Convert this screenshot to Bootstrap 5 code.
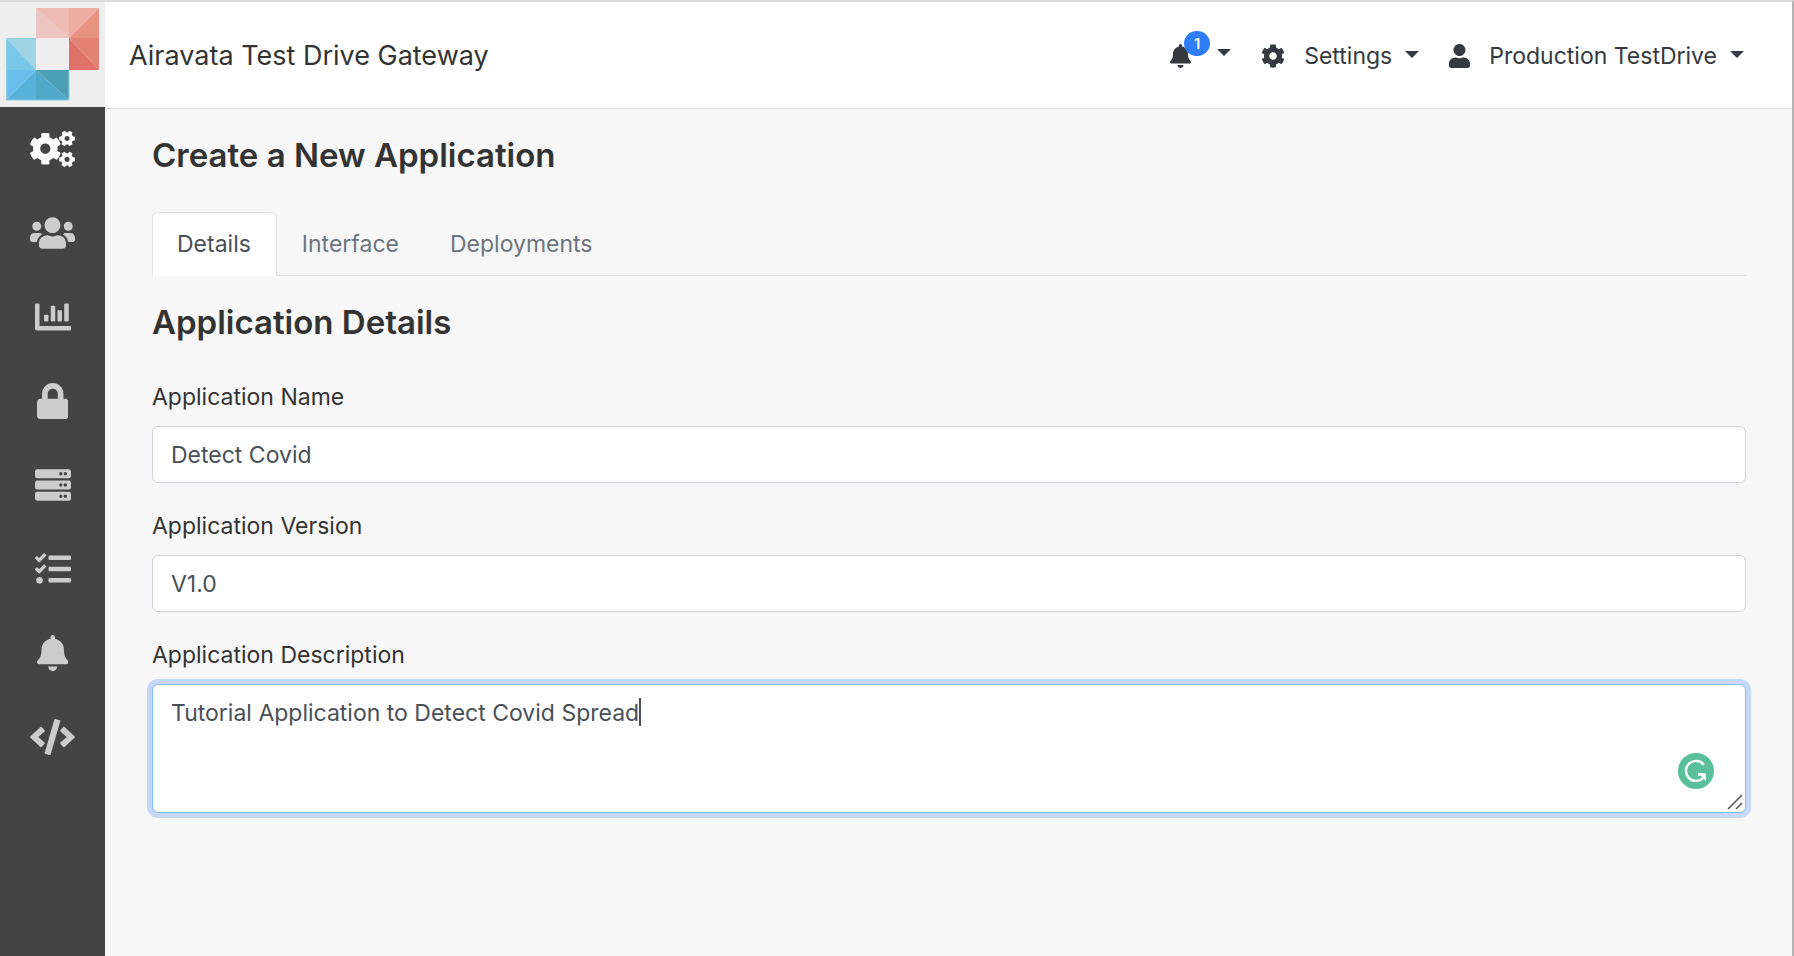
<!DOCTYPE html>
<html lang="en">
<head>
<meta charset="utf-8">
<meta name="viewport" content="width=device-width, initial-scale=1">
<title>Airavata Test Drive Gateway</title>
<link rel="stylesheet" href="https://cdn.jsdelivr.net/npm/bootstrap@5.3.0/dist/css/bootstrap.min.css">
<style>
  body { font-family: Inter, "Liberation Sans", sans-serif; font-size: 23px; line-height: 36px; color: #333; background: #f7f7f7; }
  .app-shell { border-top: 2px solid #dcdcdc; border-right: 2px solid #b4b4b4; }
  .side-rail { width: 105px; background: #444; }
  .side-rail .nav-link { height: 84px; color: #ccc; }
  .side-rail .nav-link.active { color: #fff; }
  .side-rail svg:not(.brand-logo) { height: 36px; fill: currentColor; }
  .brand-logo { width: 105px; height: 105px; }
  .top-bar { height: 107px; border-bottom: 1px solid #dcdcdc; padding: 2px 48px 0 24px; }
  .site-title { font-size: 27px; color: #333; }
  .top-bar .menu-btn { color: #343a40; font-size: 23px; line-height: 36px; }
  .top-bar .menu-btn svg { height: 24px; margin-right: 19px; fill: currentColor; }
  .top-bar .bell-toggle svg { margin-right: 0; }
  .top-bar .dropdown-toggle::after { border-width: 7px 7px 0; margin: 0 0 4px 13px; }
  .top-bar .bell-toggle::after { margin-left: 26px; margin-bottom: 8px; }
  .menu-gap { gap: 30px; }
  .top-bar .bell-badge { left: 14px; top: -13px; min-width: 26px; font-size: 15px; line-height: 25px; background: #2f7df6; font-weight: 600; }
  .page-body { padding: 24px 46px 24px 47px; }
  h1, h2 { font-size: 33px; font-weight: 600; line-height: 44px; }
  .tab-strip { border-bottom: 1px solid #dee2e6; --bs-nav-tabs-border-radius: 6px; margin-top: 35px; }
  .tab-strip .nav-link { padding: 12px 25px 12px 24px; line-height: 38px; color: #6c757d; }
  .tab-strip .nav-link.active { color: #495057; background: #fff; border-color: #dee2e6 #dee2e6 #fff; }
  .details-form { padding-top: 34px; }
  .form-label { margin-bottom: 11px; padding-top: 1px; display: block; }
  .form-control { font-size: 23px; line-height: 36px; padding: 10px 18px; height: 57px; color: #495057; border: 1px solid #ced4da; border-radius: 6px; }
  textarea.form-control { height: 129px; resize: none; border-color: #80bdff; box-shadow: 0 0 0 5px #c5d8f8; }
  .text-caret { left: 487px; top: 14px; width: 2px; height: 28px; background: #495057; }
  .writing-mark { right: 32px; bottom: 24px; width: 36px; height: 36px; }
  .grip-mark { right: 3px; bottom: 3px; width: 16px; height: 16px; }
</style>
</head>
<body>
<svg class="d-none" aria-hidden="true">
  <symbol id="cog" viewBox="0 0 512 512"><path d="M487.4 315.7l-42.6-24.6c4.3-23.2 4.3-47 0-70.2l42.6-24.6c4.9-2.8 7.1-8.6 5.5-14-11.1-35.6-30-67.8-54.7-94.6-3.8-4.1-10-5.1-14.8-2.3L380.8 110c-17.9-15.4-38.5-27.3-60.8-35.1V25.8c0-5.6-3.9-10.5-9.4-11.7-36.7-8.2-74.3-7.8-109.2 0-5.5 1.2-9.4 6.1-9.4 11.7V75c-22.2 7.9-42.8 19.8-60.8 35.1L88.7 85.5c-4.9-2.8-11-1.9-14.8 2.3-24.7 26.7-43.6 58.9-54.7 94.6-1.7 5.4.6 11.2 5.5 14L67.3 221c-4.3 23.2-4.3 47 0 70.2l-42.6 24.6c-4.9 2.8-7.1 8.6-5.5 14 11.1 35.6 30 67.8 54.7 94.6 3.8 4.1 10 5.1 14.8 2.3l42.6-24.6c17.9 15.4 38.5 27.3 60.8 35.1v49.2c0 5.6 3.9 10.5 9.4 11.7 36.7 8.2 74.3 7.8 109.2 0 5.5-1.2 9.4-6.1 9.4-11.7v-49.2c22.2-7.9 42.8-19.8 60.8-35.1l42.6 24.6c4.9 2.8 11 1.9 14.8-2.3 24.7-26.7 43.6-58.9 54.7-94.6 1.5-5.5-.7-11.3-5.6-14.1zM256 336c-44.1 0-80-35.9-80-80s35.9-80 80-80 80 35.9 80 80-35.9 80-80 80z"/></symbol>
  <symbol id="bell" viewBox="0 0 448 512"><path d="M224 512c35.32 0 63.97-28.65 63.97-64H160.03c0 35.35 28.65 64 63.97 64zm215.39-149.71c-19.32-20.76-55.47-51.99-55.47-154.29 0-77.7-54.48-139.9-127.94-155.16V32c0-17.67-14.32-32-31.98-32s-31.98 14.33-31.98 32v20.84C118.56 68.1 64.08 130.3 64.08 208c0 102.3-36.15 133.53-55.47 154.29-6 6.45-8.66 14.16-8.61 21.71.11 16.4 12.98 32 32.1 32h383.8c19.12 0 32-15.6 32.1-32 .05-7.55-2.61-15.27-8.61-21.71z"/></symbol>
</svg>
<div class="app-shell d-flex min-vh-100">
  <aside class="side-rail flex-shrink-0">
    <a href="#" class="d-block" aria-label="Home">
      <svg class="brand-logo d-block" viewBox="0 0 105 105">
        <path fill="#eee" d="M0 0h105v105H0z"/>
        <path fill="#ecc4c0" d="M36 6l33 30H36z"/><path fill="#eebcb2" d="M36 6h33v30z"/>
        <path fill="#eeae9f" d="M69 6h30L69 36z"/><path fill="#e89282" d="M99 6v30H69z"/>
        <path fill="#e58278" d="M69 36h30v32z"/><path fill="#df726b" d="M69 36l30 32H69z"/>
        <path fill="#a0d4e3" d="M6 36h30v32z"/><path fill="#79c8e9" d="M6 36l30 32H6z"/>
        <path fill="#68bfed" d="M6 68h30L6 98z"/><path fill="#58b3da" d="M36 68v30H6z"/>
        <path fill="#4da0b3" d="M36 68h33v30z"/><path fill="#4fa9c8" d="M36 68l33 30H36z"/>
        <path fill="none" stroke="#8ccde4" d="M36 36.500H6.500V98H69V68"/>
      </svg>
    </a>
    <nav class="nav flex-column" aria-label="Main">
      <a href="#" class="nav-link active p-0 d-flex align-items-center justify-content-center" aria-label="Applications" aria-current="page"><svg viewBox="0 0 640 512"><use href="#cog" x="-14" y="20" width="464" height="464"/><g transform="rotate(90 527 106)"><use href="#cog" x="411" y="-10" width="232" height="232"/></g><g transform="rotate(90 527 404)"><use href="#cog" x="411" y="288" width="232" height="232"/></g></svg></a>
      <a href="#" class="nav-link p-0 d-flex align-items-center justify-content-center" aria-label="Groups"><svg viewBox="0 0 640 512"><path d="M96 224c35.3 0 64-28.7 64-64s-28.7-64-64-64-64 28.7-64 64 28.700 64 64 64zm448 0c35.300 0 64-28.700 64-64s-28.700-64-64-64-64 28.700-64 64 28.700 64 64 64zm32 32h-64c-17.600 0-33.500 7.100-45.100 18.600 40.300 22.100 68.900 62 75.100 109.400h66c17.700 0 32-14.300 32-32v-32c0-35.300-28.700-64-64-64zm-256 0c61.900 0 112-50.100 112-112S381.900 32 320 32 208 82.100 208 144s50.100 112 112 112zm76.800 32h-8.300c-20.800 10-43.900 16-68.500 16s-47.600-6-68.500-16h-8.300C179.600 288 128 339.600 128 403.200V432c0 26.500 21.500 48 48 48h288c26.500 0 48-21.500 48-48v-28.800c0-63.600-51.600-115.200-115.200-115.200zm-223.700-13.400C161.500 263.100 145.600 256 128 256H64c-35.300 0-64 28.700-64 64v32c0 17.700 14.300 32 32 32h65.900c6.300-47.400 34.900-87.300 75.200-109.400z"/></svg></a>
      <a href="#" class="nav-link p-0 d-flex align-items-center justify-content-center" aria-label="Statistics"><svg viewBox="0 0 512 512"><path d="M332.8 320h38.4c6.400 0 12.800-6.400 12.800-12.800V172.800c0-6.400-6.400-12.800-12.800-12.800h-38.400c-6.400 0-12.800 6.400-12.800 12.800v134.400c0 6.400 6.400 12.800 12.800 12.800zm96 0h38.400c6.400 0 12.800-6.400 12.800-12.800V76.800c0-6.400-6.400-12.800-12.800-12.800h-38.400c-6.400 0-12.800 6.400-12.800 12.800v230.400c0 6.400 6.400 12.800 12.800 12.800zm-288 0h38.400c6.400 0 12.800-6.400 12.800-12.800v-70.400c0-6.400-6.400-12.800-12.800-12.800h-38.400c-6.400 0-12.800 6.400-12.800 12.800v70.400c0 6.400 6.400 12.800 12.800 12.800zm96 0h38.400c6.400 0 12.800-6.400 12.800-12.800V108.800c0-6.400-6.400-12.800-12.800-12.800h-38.400c-6.400 0-12.800 6.400-12.800 12.800v198.400c0 6.400 6.400 12.800 12.800 12.800zM496 384H64V80c0-8.840-7.160-16-16-16H16C7.160 64 0 71.160 0 80v336c0 17.670 14.330 32 32 32h464c8.840 0 16-7.160 16-16v-32c0-8.840-7.160-16-16-16z"/></svg></a>
      <a href="#" class="nav-link p-0 d-flex align-items-center justify-content-center" aria-label="Credentials"><svg viewBox="0 0 448 512"><path d="M400 224h-24v-72C376 68.200 307.800 0 224 0S72 68.200 72 152v72H48c-26.500 0-48 21.500-48 48v192c0 26.500 21.500 48 48 48h352c26.500 0 48-21.500 48-48V272c0-26.500-21.500-48-48-48zm-104 0H152v-72c0-39.700 32.300-72 72-72s72 32.300 72 72v72z"/></svg></a>
      <a href="#" class="nav-link p-0 d-flex align-items-center justify-content-center" aria-label="Resources"><svg viewBox="0 0 512 512"><path fill-rule="evenodd" d="M32 32h448a32 32 0 0 1 32 32v64a32 32 0 0 1-32 32H32a32 32 0 0 1-32-32V64a32 32 0 0 1 32-32zm336 40a24 24 0 1 0 0 48 24 24 0 0 0 0-48zm64 0a24 24 0 1 0 0 48 24 24 0 0 0 0-48zM32 192h448a32 32 0 0 1 32 32v64a32 32 0 0 1-32 32H32a32 32 0 0 1-32-32v-64a32 32 0 0 1 32-32zm336 40a24 24 0 1 0 0 48 24 24 0 0 0 0-48zm64 0a24 24 0 1 0 0 48 24 24 0 0 0 0-48zM32 352h448a32 32 0 0 1 32 32v64a32 32 0 0 1-32 32H32a32 32 0 0 1-32-32v-64a32 32 0 0 1 32-32zm336 40a24 24 0 1 0 0 48 24 24 0 0 0 0-48zm64 0a24 24 0 1 0 0 48 24 24 0 0 0 0-48z"/></svg></a>
      <a href="#" class="nav-link p-0 d-flex align-items-center justify-content-center" aria-label="Tasks"><svg viewBox="0 0 512 512"><path d="M139.610 35.500a12 12 0 0 0-17 0L58.930 98.810l-22.700-22.120a12 12 0 0 0-17 0L3.530 92.410a12 12 0 0 0 0 17l47.590 47.400a12.780 12.780 0 0 0 17.610 0l15.590-15.620L156.520 69a12.090 12.090 0 0 0 .09-17zm0 159.190a12 12 0 0 0-17 0l-63.680 63.720-22.700-22.100a12 12 0 0 0-17 0L3.530 252a12 12 0 0 0 0 17L51 316.500a12.770 12.770 0 0 0 17.600 0l15.700-15.690 72.200-72.220a12 12 0 0 0 .09-16.900zM64 368c-26.490 0-48.590 21.500-48.590 48S37.530 464 64 464a48 48 0 0 0 0-96zm432 16H208a16 16 0 0 0-16 16v32a16 16 0 0 0 16 16h288a16 16 0 0 0 16-16v-32a16 16 0 0 0-16-16zm0-320H208a16 16 0 0 0-16 16v32a16 16 0 0 0 16 16h288a16 16 0 0 0 16-16V80a16 16 0 0 0-16-16zm0 160H208a16 16 0 0 0-16 16v32a16 16 0 0 0 16 16h288a16 16 0 0 0 16-16v-32a16 16 0 0 0-16-16z"/></svg></a>
      <a href="#" class="nav-link p-0 d-flex align-items-center justify-content-center" aria-label="Notices"><svg viewBox="0 0 448 512"><use href="#bell"/></svg></a>
      <a href="#" class="nav-link p-0 d-flex align-items-center justify-content-center" aria-label="Developers"><svg viewBox="0 0 640 512"><path d="M278.900 511.500l-61-17.700c-6.400-1.800-10-8.500-8.200-14.900L346.200 8.700c1.800-6.400 8.500-10 14.900-8.200l61 17.700c6.400 1.800 10 8.500 8.200 14.900L293.800 503.300c-1.900 6.400-8.500 10.100-14.900 8.200zm-114-112.200l43.500-46.400c4.600-4.900 4.300-12.700-.8-17.200L117 256l90.600-79.700c5.100-4.500 5.500-12.300.8-17.200l-43.500-46.400c-4.500-4.800-12.100-5.100-17-.5L3.800 247.200c-5.100 4.700-5.100 12.800 0 17.500l144.100 135.100c4.900 4.600 12.500 4.400 17-.5zm327.200.6l144.100-135.100c5.100-4.700 5.100-12.800 0-17.500L492.100 112.100c-4.800-4.500-12.400-4.300-17 .5L431.600 159c-4.600 4.900-4.300 12.700.8 17.200L523 256l-90.600 79.700c-5.100 4.500-5.500 12.300-.8 17.200l43.500 46.400c4.500 4.900 12.100 5.100 17 .6z"/></svg></a>
    </nav>
  </aside>

  <div class="flex-grow-1">
    <header class="top-bar bg-white d-flex align-items-center justify-content-between">
      <a href="#" class="site-title text-decoration-none">Airavata Test Drive Gateway</a>
      <div class="menu-gap d-flex align-items-center">
        <button type="button" class="menu-btn bell-toggle dropdown-toggle position-relative btn border-0 p-0 d-flex align-items-center" data-bs-toggle="dropdown" aria-label="Notifications"><svg viewBox="0 0 448 512"><use href="#bell"/></svg><span class="bell-badge badge rounded-pill position-absolute p-0 text-center">1</span></button>
        <button type="button" class="menu-btn dropdown-toggle btn border-0 p-0 d-flex align-items-center" data-bs-toggle="dropdown"><svg viewBox="0 0 512 512"><use href="#cog"/></svg>Settings</button>
        <button type="button" class="menu-btn dropdown-toggle btn border-0 p-0 d-flex align-items-center" data-bs-toggle="dropdown"><svg viewBox="0 0 448 512"><path d="M224 256c70.700 0 128-57.300 128-128S294.700 0 224 0 96 57.300 96 128s57.300 128 128 128zm89.600 32h-16.700c-22.200 10.200-46.900 16-72.900 16s-50.600-5.800-72.900-16h-16.700C60.200 288 0 348.200 0 422.400V464c0 26.500 21.500 48 48 48h352c26.500 0 48-21.500 48-48v-41.600c0-74.200-60.200-134.400-134.400-134.400z"/></svg>Production TestDrive</button>
      </div>
    </header>

    <main class="page-body">
      <h1 class="mb-0">Create a New Application</h1>
      <ul class="tab-strip nav nav-tabs">
        <li class="nav-item"><a class="nav-link active" aria-current="page" href="#">Details</a></li>
        <li class="nav-item"><a class="nav-link" href="#">Interface</a></li>
        <li class="nav-item"><a class="nav-link" href="#">Deployments</a></li>
      </ul>
      <h2 class="mt-4 mb-0">Application Details</h2>
      <form class="details-form">
        <div class="mb-4">
          <label class="form-label" for="app-name">Application Name</label>
          <input class="form-control" id="app-name" type="text" value="Detect Covid">
        </div>
        <div class="mb-4">
          <label class="form-label" for="app-version">Application Version</label>
          <input class="form-control" id="app-version" type="text" value="V1.0">
        </div>
        <div>
          <label class="form-label" for="app-description">Application Description</label>
          <div class="position-relative">
            <textarea class="form-control" id="app-description" rows="3">Tutorial Application to Detect Covid Spread</textarea>
            <span class="text-caret position-absolute"></span>
            <svg class="writing-mark position-absolute" viewBox="0 0 36 36" aria-hidden="true"><circle cx="18" cy="18" r="18" fill="#58c09b"/><path fill="none" stroke="#fff" stroke-width="2.400" d="M26 12a10 10 0 1 0-1 13M20 21.500h7"/><path fill="#fff" d="M21 20.500h7v7.500z"/></svg>
            <svg class="grip-mark position-absolute" viewBox="0 0 16 16" aria-hidden="true"><path stroke="#555" stroke-width="1.500" d="M1 15L15 1M9 15l6-6"/></svg>
          </div>
        </div>
      </form>
    </main>
  </div>
</div>
<script src="https://cdn.jsdelivr.net/npm/bootstrap@5.3.0/dist/js/bootstrap.bundle.min.js"></script>
</body>
</html>
